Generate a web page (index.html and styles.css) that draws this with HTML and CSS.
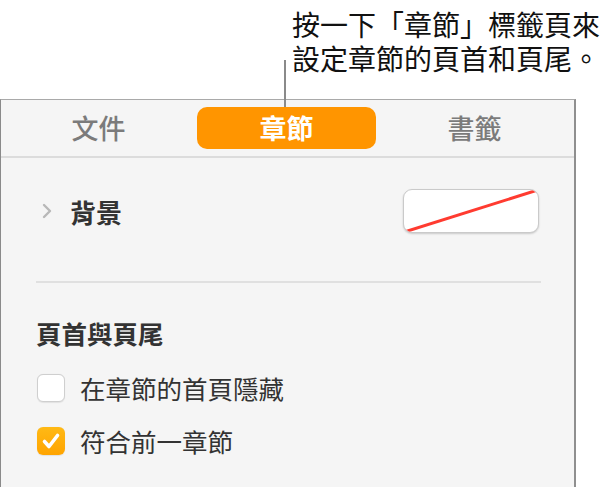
FILE: index.html
```html
<!DOCTYPE html>
<html lang="zh-Hant">
<head>
<meta charset="utf-8">
<title>章節</title>
<link rel="stylesheet" href="styles.css">
</head>
<body>
<div class="callout">
  <div class="callout-line">按一下「章節」標籤頁來</div>
  <div class="callout-line">設定章節的頁首和頁尾。</div>
</div>
<div class="panel">
  <div class="tabs">
    <div class="tab">文件</div>
    <div class="tab active">章節</div>
    <div class="tab">書籤</div>
  </div>
  <div class="bg-row">
    <svg class="chevron" width="10" height="16" viewBox="0 0 10 16"><polyline points="2,2 8,8 2,14" fill="none" stroke="#b8b8b8" stroke-width="2.4" stroke-linecap="round" stroke-linejoin="round"/></svg>
    <span class="bg-label">背景</span>
    <div class="well">
      <svg width="136" height="44" viewBox="0 0 136 44"><line x1="3" y1="42.5" x2="133" y2="1.5" stroke="#ff3b30" stroke-width="3"/></svg>
    </div>
  </div>
  <div class="divider"></div>
  <div class="section-title">頁首與頁尾</div>
  <div class="check-row">
    <span class="box"></span>
    <span class="check-label">在章節的首頁隱藏</span>
  </div>
  <div class="check-row">
    <span class="box checked"><svg width="28" height="28" viewBox="0 0 28 28"><path d="M7.5 14.5 L12 19.5 L20.5 8.5" fill="none" stroke="#fff" stroke-width="3.6" stroke-linecap="round" stroke-linejoin="round"/></svg></span>
    <span class="check-label">符合前一章節</span>
  </div>
</div>
<div class="leader"></div>
</body>
</html>
```

FILE: styles.css
```css
html, body {
  margin: 0;
  padding: 0;
  background: #ffffff;
}
body {
  font-family: "Noto Sans CJK TC", "Noto Sans CJK SC", "Noto Sans", sans-serif;
  width: 606px;
  height: 487px;
  overflow: hidden;
  position: relative;
}
.callout {
  margin: 7px 0 0 292px;
  font-size: 28px;
  color: #111111;
  white-space: nowrap;
}
.callout-line {
  height: 34px;
  line-height: 34px;
  overflow: visible;
}
.leader {
  position: absolute;
  left: 284px;
  top: 60px;
  width: 2px;
  height: 47px;
  background: #8a8a8a;
}
.panel {
  margin-top: 24px;
  width: 576px;
  height: 400px;
  box-sizing: border-box;
  background: #f5f5f5;
  border-top: 1px solid #a9a9a9;
  border-left: 1px solid #8a8a8a;
  border-right: 2px solid #8f8f8f;
}
.tabs {
  display: grid;
  grid-template-columns: repeat(3, 179px);
  column-gap: 9px;
  padding: 7px 0 7px 8px;
  border-bottom: 2px solid #dcdcdc;
}
.tab {
  height: 42px;
  line-height: 42px;
  text-align: center;
  font-size: 27px;
  font-weight: 500;
  color: #7b7b7b;
  border-radius: 10px;
}
.tab.active {
  background: #ff9500;
  color: #ffffff;
  font-weight: 700;
}
.bg-row {
  display: flex;
  align-items: center;
  margin-top: 31px;
  padding: 0 35px;
  height: 44px;
}
.chevron {
  margin-left: 6px;
  flex: none;
}
.bg-label {
  margin-left: 18px;
  font-size: 26px;
  font-weight: 700;
  color: #333333;
}
.well {
  margin-left: auto;
  width: 136px;
  height: 44px;
  box-sizing: border-box;
  background: #ffffff;
  border: 1px solid #cacaca;
  border-radius: 9px;
  box-shadow: 0 1px 2px rgba(0, 0, 0, 0.18);
  overflow: hidden;
}
.well svg {
  display: block;
  margin: -1px 0 0 -1px;
}
.divider {
  margin: 48px 33px 0 35px;
  height: 2px;
  background: #e0e0e0;
}
.section-title {
  margin: 33px 0 0 35px;
  font-size: 25.5px;
  line-height: 34px;
  font-weight: 700;
  color: #333333;
}
.check-row {
  display: flex;
  align-items: center;
  margin-left: 36px;
  margin-top: 24px;
  height: 28px;
}
.check-row + .check-row {
  margin-top: 25px;
}
.box {
  flex: none;
  width: 28px;
  height: 28px;
  box-sizing: border-box;
  border-radius: 6px;
  background: #ffffff;
  border: 1px solid #cfcfcf;
  box-shadow: 0 0.5px 1px rgba(0, 0, 0, 0.08);
}
.box.checked {
  border: none;
  background: linear-gradient(#ffb915, #ffa400);
}
.box svg {
  display: block;
}
.check-label {
  margin-left: 15px;
  font-size: 25.5px;
  line-height: 28px;
  color: #333333;
}
```
